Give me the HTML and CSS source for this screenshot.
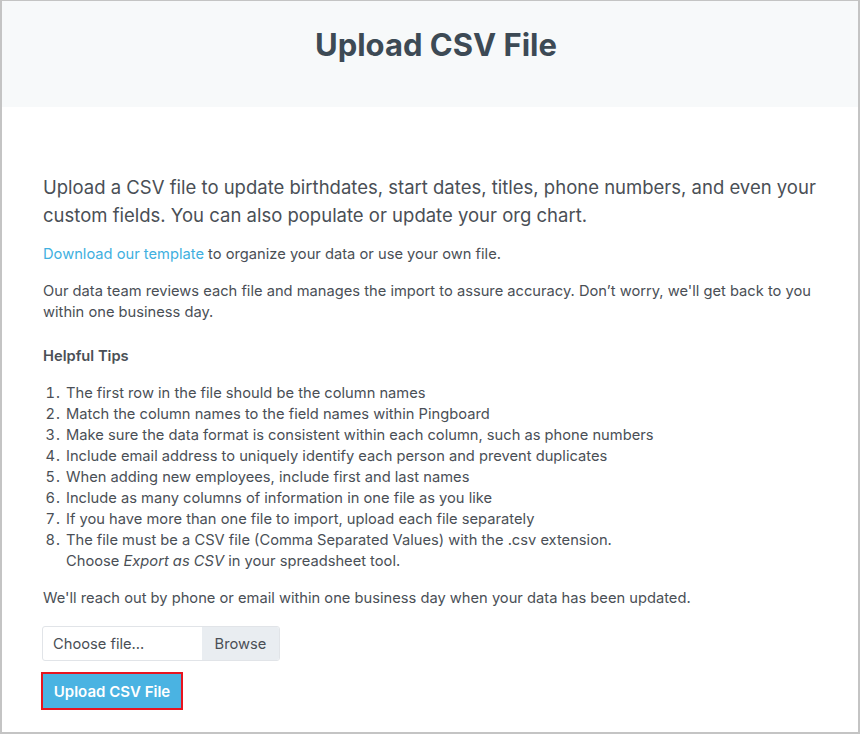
FILE: index.html
```html
<!DOCTYPE html>
<html>
<head>
<meta charset="utf-8">
<link rel="stylesheet" href="styles.css">
</head>
<body>
<div class="frame">
  <header class="head">
    <h1 class="title">Upload CSV File</h1>
  </header>
  <main class="content">
    <p class="lead">Upload a CSV file to update birthdates, start dates, titles, phone numbers, and even your custom fields. You can also populate or update your org chart.</p>
    <p class="txt"><a class="link" href="#">Download our template</a> to organize your data or use your own file.</p>
    <p class="txt">Our data team reviews each file and manages the import to assure accuracy. Don’t worry, we'll get back to you within one business day.</p>
    <h2 class="tips">Helpful Tips</h2>
    <ol class="list">
      <li>The first row in the file should be the column names</li>
      <li>Match the column names to the field names within Pingboard</li>
      <li>Make sure the data format is consistent within each column, such as phone numbers</li>
      <li>Include email address to uniquely identify each person and prevent duplicates</li>
      <li>When adding new employees, include first and last names</li>
      <li>Include as many columns of information in one file as you like</li>
      <li>If you have more than one file to import, upload each file separately</li>
      <li>The file must be a CSV file (Comma Separated Values) with the .csv extension.<br>Choose <em>Export as CSV</em> in your spreadsheet tool.</li>
    </ol>
    <p class="txt">We'll reach out by phone or email within one business day when your data has been updated.</p>
    <div class="file">
      <span class="file-name">Choose file...</span>
      <span class="file-btn">Browse</span>
    </div>
    <div class="hl">
      <button class="submit">Upload CSV File</button>
    </div>
  </main>
</div>
</body>
</html>
```
FILE: styles.css
```css
html, body { margin: 0; padding: 0; background: #fff; }
body { font-family: Inter, "Noto Sans", sans-serif; color: #4a4f56; }
.frame {
  width: 860px; height: 734px; box-sizing: border-box;
  border: 1px solid #c4c4c4; border-left-width: 2px; border-right-width: 2px; border-bottom-width: 2px;
  overflow: hidden;
}
.head {
  background: #f7f9fa; height: 106px;
  display: flex; justify-content: center;
}
.title {
  margin: 0; padding-top: 25px; padding-left: 12px;
  font-size: 31px; font-weight: 700; color: #3d4a55; letter-spacing: 0;
}
.content { padding: 66px 40px 0 41px; }
.lead { margin: 0 0 15px; font-size: 18.5px; line-height: 28px; color: #4a4f56; }
.txt { margin: 0 0 16px; font-size: 14.7px; line-height: 21px; }
.link { color: #3fb0e0; text-decoration: none; }
.tips { margin: 23px 0 16px; font-size: 14.7px; font-weight: 600; line-height: 21px; color: #4a4f56; }
.list { margin: 0 0 16px; padding-left: 23px; font-size: 14.7px; line-height: 21px; }
.list li::marker { letter-spacing: 1px; }
.file {
  display: flex; width: 238px; height: 35px; box-sizing: border-box;
  border: 1px solid #e1e4e8; border-radius: 3px; overflow: hidden;
  margin-top: 17px; margin-left: -1px;
}
.file-name { flex: 1; display: flex; align-items: center; padding-left: 10px; font-size: 14.7px; color: #4a4f56; }
.file-btn { width: 77px; background: #e9edf1; display: flex; align-items: center; justify-content: center; font-size: 14.7px; color: #4a4f56; }
.hl { display: flex; width: fit-content; border: 2px solid #e8141f; margin-top: 11px; margin-left: -2px; }
.submit {
  display: block; border: 0; margin: 0; background: #4ab3e2; color: #fff;
  font-family: Inter, sans-serif; font-size: 15px; font-weight: 600;
  width: 138px; height: 34px; padding: 0;
}
```
